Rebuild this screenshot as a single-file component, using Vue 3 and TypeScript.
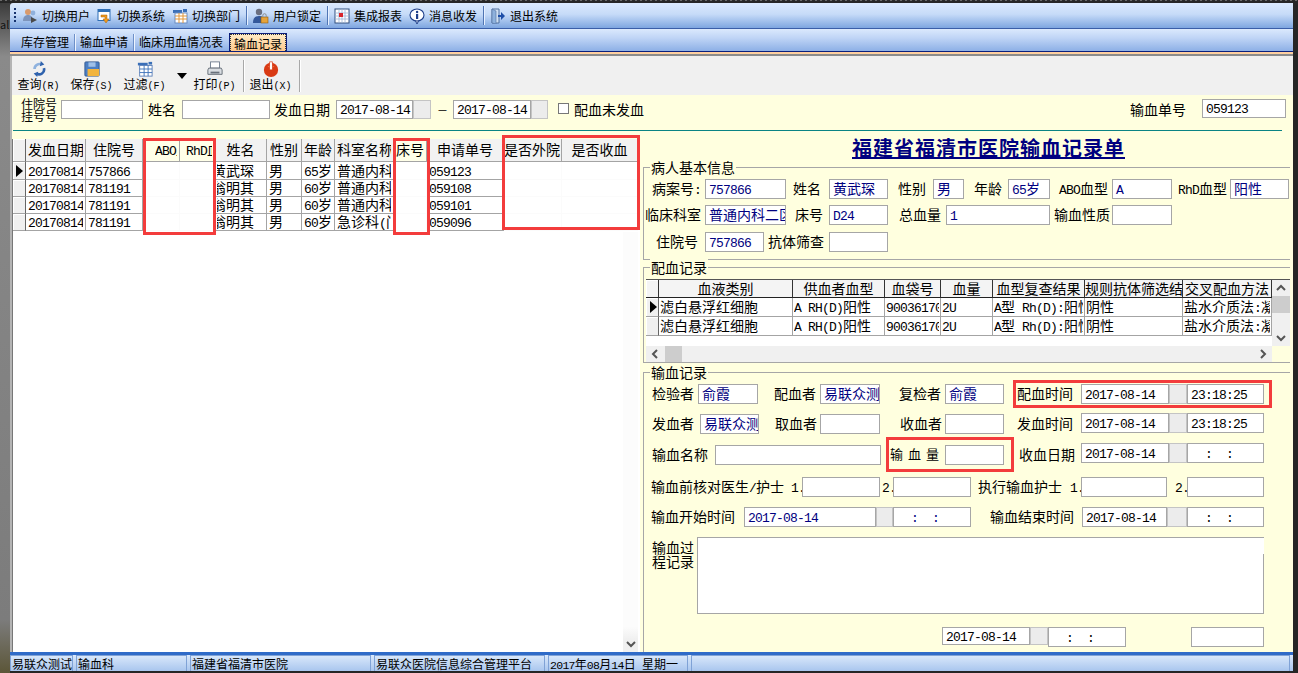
<script setup lang="ts">
interface Cell { k: string; a: number; b: number; t?: string; cls?: string; dy?: number }
interface Placed { cls: string[]; style: Record<string, string>; runs: { t: string; n: boolean }[] }

const runs = (s: string) => (s.match(/[\x20-\x7e]+|[^\x20-\x7e]+/g) || []).map(t => ({ t, n: /^[\x20-\x7e]/.test(t) }))
const l = (t: string, a: number, b: number, cls = '', dy = 0): Cell => ({ k: 'lab', t, a, b, cls, dy })
const f = (t: string, a: number, b: number, cls = '', dy = 0): Cell => ({ k: 'fld', t, a, b, cls, dy })
const v = (t: string, a: number, b: number) => f(t, a, b, 'blue')
const g = (a: number, b: number, cls = '', dy = 0): Cell => ({ k: 'btn', t: '', a, b, cls, dy })

function place(base: number, mt: number, cells: Cell[]) {
  let x = base
  const out: Placed[] = cells.map(c => {
    const st: Record<string, string> = { marginLeft: c.a - x + 'px', width: c.b - c.a + 'px' }
    if (c.dy) st.marginTop = c.dy + 'px'
    x = c.b
    return { cls: [c.k, c.cls || ''], style: st, runs: runs(c.t || '') }
  })
  return { mt: mt + 'px', cells: out }
}

const filterRows = [place(12, 5, [
  l('住院号\n挂号号', 21, 56, 'stack', -2), f('', 61, 143, 'h19'), l('姓名', 148, 177, 'big'), f('', 182, 270, 'h19'),
  l('发血日期', 274, 332), f('2017-08-14', 336, 413, 'h19'), g(413, 431, 'h19'), l('—', 438, 447, 'dash'),
  f('2017-08-14', 453, 531, 'h19'), g(531, 548, 'h19'), { k: 'chk', a: 558, b: 569, dy: 3 }, l('配血未发血', 574, 645),
  l('输血单号', 1130, 1186), f('059123', 1202, 1286, 'h19', -1)
])]

const patientRows = [
  place(644, 11, [l('病案号:', 652, 701), v('757866', 705, 786), l('姓名', 793, 821), v('黄武琛', 829, 888), l('性别', 898, 926), v('男', 933, 964), l('年龄', 974, 1002), v('65岁', 1008, 1050), l('ABO血型', 1059, 1108), v('A', 1112, 1172), l('RhD血型', 1178, 1227), v('阳性', 1230, 1289)]),
  place(644, 6, [l('临床科室', 645, 699), v('普通内科二区', 705, 786), l('床号', 795, 823), v('D24', 829, 888), l('总血量', 899, 942), v('1', 946, 1050), l('输血性质', 1054, 1110), f('', 1112, 1172)]),
  place(644, 7, [l('住院号', 656, 698), v('757866', 705, 764), l('抗体筛查', 768, 824), f('', 829, 888)])
]

const dateTime = (d: string, t: string, dy = 0) => [f(d, 1081, 1169, '', dy), g(1169, 1187, '', dy), f(t, 1187, 1264, '', dy)]
const transRows = [
  place(644, 11, [l('检验者', 652, 694), v('俞霞', 698, 758), l('配血者', 774, 816), v('易联众测试', 820, 880), l('复检者', 899, 941), v('俞霞', 945, 1004), l('配血时间', 1017, 1073), ...dateTime('2017-08-14', '23:18:25')]),
  place(644, 10, [l('发血者', 652, 694), v('易联众测试', 700, 759), l('取血者', 775, 817), f('', 820, 880), l('收血者', 900, 942), f('', 945, 1004), l('发血时间', 1017, 1073), ...dateTime('2017-08-14', '23:18:25', -1)]),
  place(644, 11, [l('输血名称', 652, 708), f('', 715, 881), l('输血量', 890, 940, 'spaced'), f('', 945, 1004), l('收血日期', 1019, 1075), ...dateTime('2017-08-14', '  :  :', -2)]),
  place(644, 12, [l('输血前核对医生/护士', 651, 787), l('1.', 791, 802), f('', 802, 880), l('2.', 882, 893), f('', 893, 971), l('执行输血护士', 978, 1062), l('1.', 1070, 1081), f('', 1081, 1167), l('2.', 1175, 1186), f('', 1187, 1264)]),
  place(644, 10, [l('输血开始时间', 651, 736), f('2017-08-14', 744, 876, 'blue'), g(876, 893), f('  :  :', 893, 971, 'blue'), l('输血结束时间', 990, 1074), f('2017-08-14', 1082, 1167), g(1167, 1187), f('  :  :', 1187, 1264)])
]
const endRows = [place(644, 13, [f('2017-08-14', 942, 1030, 'h18'), g(1030, 1048, 'h18'), f('  :  :', 1048, 1126), f('', 1191, 1264)])]

const leftCols = [13, 60, 57, 37, 35, 52, 35, 33, 59, 33, 77, 58, 76]
const leftHead = [
  { t: '', c: 'ind' }, { t: '发血日期', c: '' }, { t: '住院号', c: '' }, { t: 'ABO血型', c: 'pale abo' }, { t: 'RhD血型', c: 'pale rhd' },
  { t: '姓名', c: '' }, { t: '性别', c: '' }, { t: '年龄', c: '' }, { t: '科室名称', c: '' }, { t: '床号', c: 'pale' },
  { t: '申请单号', c: '' }, { t: '是否外院', c: 'flush' }, { t: '是否收血', c: '' }
].map(h => ({ ...h, runs: runs(h.t) }))
const leftRows = [
  ['20170814', '757866', '', '', '黄武琛', '男', '65岁', '普通内科二区', '', '059123', '', ''],
  ['20170814', '781191', '', '', '翁明其', '男', '60岁', '普通内科二区', '', '059108', '', ''],
  ['20170814', '781191', '', '', '翁明其', '男', '60岁', '普通内科二区', '', '059101', '', ''],
  ['20170814', '781191', '', '', '翁明其', '男', '60岁', '急诊科(门诊)', '', '059096', '', '']
].map(r => r.map(runs))
const leftCellClass = (i: number) => ({ mask: [2, 3, 8, 10, 11].includes(i), clip: i === 4 })

const matchCols = [13, 134, 92, 56, 52, 92, 98, 89]
const matchHead = ['', '血液类别', '供血者血型', '血袋号', '血量', '血型复查结果', '规则抗体筛选结果', '交叉配血方法'].map(runs)
const matchRow = ['滤白悬浮红细胞', 'A RH(D)阳性', '90036170', '2U', 'A型 Rh(D):阳性', '阴性', '盐水介质法:凝集'].map(runs)
const matchRows = [matchRow, matchRow]

const statusCells = [
  { t: '易联众测试员', w: 63 }, { t: '输血科', w: 111 }, { t: '福建省福清市医院', w: 181 },
  { t: '易联众医院信息综合管理平台', w: 171 }, { t: '2017年08月14日 星期一', w: 140 }, { t: '', w: 599 }
].map(s => ({ runs: runs(s.t), style: { width: s.w + 'px' } }))

const marks = [
  [143, 138, 73, 97], [393, 138, 37, 97], [502, 135, 138, 95], [1013, 380, 259, 28], [886, 437, 128, 35]
].map(([x, y, w, h]) => ({ left: x + 'px', top: y + 'px', width: w + 'px', height: h + 'px' }))
</script>

<template>
  <div class="app">
    <div class="dots"></div>
    <div class="shell">
      <div class="strip"><span class="behind">al</span></div>
      <div class="main">
        <div class="bar1">
          <i class="grip"></i>
          <div class="tool">
            <svg viewBox="0 0 16 16"><circle cx="6" cy="4" r="3" fill="#d99a6c"/><circle cx="11" cy="5" r="2.4" fill="#8fb0dc"/><path d="M1 13c0-4 2-6 5-6s5 2 5 6z" fill="#7d94bb"/><path d="M9 9l6 3-6 3z" fill="#4a4a4a"/></svg>
            <span>切换用户</span>
          </div>
          <div class="tool">
            <svg viewBox="0 0 16 16"><rect x="1" y="1.5" width="12" height="11" fill="#fff" stroke="#2f6fb5"/><rect x="1" y="1.5" width="12" height="2.5" fill="#2f6fb5"/><path d="M4 7h6v4h2l-3 4-3-4h2V9H4z" fill="#f09a1c" stroke="#a8620a" stroke-width=".5"/></svg>
            <span>切换系统</span>
          </div>
          <div class="tool">
            <svg viewBox="0 0 16 16"><rect x="1" y="2" width="9" height="3" fill="#3a6fb8"/><rect x="3" y="5" width="12" height="10" fill="#fff" stroke="#6a8cc0"/><path d="M3 8h12M3 11h12M7 5v10M11 5v10" stroke="#e2973a"/><path d="M11 1h4v3h-4z" fill="#3a6fb8"/></svg>
            <span>切换部门</span>
          </div>
          <i class="sep"></i>
          <div class="tool">
            <svg viewBox="0 0 16 16"><circle cx="6" cy="4" r="3.2" fill="#6a6f80"/><path d="M0 15c0-5 2-7 6-7s6 2 6 7z" fill="#34589a"/><rect x="8" y="9" width="7" height="6" fill="#e6a33a" stroke="#8d5c10" stroke-width=".6"/><path d="M9.8 9V7.400a1.700 1.700 0 0 1 3.400 0V9" fill="none" stroke="#8d8d8d"/></svg>
            <span>用户锁定</span>
          </div>
          <i class="sep"></i>
          <div class="tool">
            <svg viewBox="0 0 16 16"><rect x="1" y="1" width="14" height="14" fill="#fff" stroke="#33507f"/><path d="M1 5h14M1 8h14M1 11h14M5 1v14M8 1v14M11 1v14" stroke="#9db4d6" stroke-width=".8"/><rect x="5" y="5" width="4" height="4" fill="#d8262c"/></svg>
            <span>集成报表</span>
          </div>
          <div class="tool">
            <svg viewBox="0 0 16 16"><path d="M6 12l2 4 2-4z" fill="#fff" stroke="#1f3f8a"/><ellipse cx="8" cy="7" rx="7" ry="6" fill="#fff" stroke="#1f3f8a" stroke-width="1.100"/><rect x="7" y="6" width="2.200" height="5" fill="#1f3f8a"/><circle cx="8.100" cy="4" r="1.200" fill="#1f3f8a"/></svg>
            <span>消息收发</span>
          </div>
          <i class="sep"></i>
          <div class="tool">
            <svg viewBox="0 0 16 16"><path d="M2 1h7v14H2z" fill="#cfe0f4" stroke="#50719f"/><path d="M2 1l4 2v13l-4-1z" fill="#8eb1dc" stroke="#50719f" stroke-width=".6"/><path d="M8 7h3V4l4 4-4 4V9H8z" fill="#1d4ea8"/></svg>
            <span>退出系统</span>
          </div>
        </div>

        <div class="tabs">
          <span class="tab">库存管理</span><i class="tabsep"></i>
          <span class="tab">输血申请</span><i class="tabsep"></i>
          <span class="tab">临床用血情况表</span>
          <span class="tab active"><b>输血记录</b></span>
        </div>
        <div class="tabline"></div>

        <div class="page">
          <div class="bar2">
            <div class="big-tool">
              <svg viewBox="0 0 18 18"><path d="M4 9a5.500 5.500 0 0 1 8-5" fill="none" stroke="#8fb2de" stroke-width="3"/><path d="M14.500 8a5.500 5.500 0 0 1-8.500 6" fill="none" stroke="#2f62ad" stroke-width="3"/><path d="M11 0l4 4-5 2zM7 18l-4-4 5-2z" fill="#2f62ad"/></svg>
              <span>查询<span class="num">(R)</span></span>
            </div>
            <div class="big-tool">
              <svg viewBox="0 0 18 18"><rect x="1" y="1" width="16" height="16" rx="1" fill="#4c7fc4" stroke="#2d568f"/><rect x="4" y="9" width="13" height="8" fill="#f2b43d"/><rect x="5" y="1.500" width="8" height="5" fill="#9fc0e8"/></svg>
              <span>保存<span class="num">(S)</span></span>
            </div>
            <div class="big-tool">
              <svg viewBox="0 0 18 18"><rect x="1" y="2" width="11" height="3" fill="#3a6fb8"/><rect x="3" y="5" width="14" height="12" fill="#fff" stroke="#5a7fb8"/><path d="M3 9h14M3 13h14M8 5v12M12.500 5v12" stroke="#3a6fb8"/><rect x="13" y="1" width="4" height="3" fill="#3a6fb8"/></svg>
              <span>过滤<span class="num">(F)</span></span>
            </div>
            <i class="drop"></i>
            <div class="big-tool">
              <svg viewBox="0 0 18 18"><rect x="4" y="1" width="10" height="7" fill="#fff" stroke="#6d7a8c"/><path d="M2 8h14l1 2v5H1v-5z" fill="#d9dde2" stroke="#5d6570"/><rect x="4" y="12" width="10" height="2" fill="#68707b"/></svg>
              <span>打印<span class="num">(P)</span></span>
            </div>
            <i class="sep2 a"></i>
            <div class="big-tool">
              <svg viewBox="0 0 18 18"><circle cx="9" cy="10" r="8" fill="#d93a14"/><path d="M5 6a6 6 0 0 0 8 0" fill="#f17a4e"/><rect x="7.500" y="1" width="3" height="9" fill="#fff" stroke="#d93a14" stroke-width=".8"/></svg>
              <span>退出<span class="num">(X)</span></span>
            </div>
            <i class="sep2 b"></i>
          </div>

          <div class="filter">
            <div v-for="(r, i) in filterRows" :key="i" class="row" :style="{ marginTop: r.mt }">
              <div v-for="(c, j) in r.cells" :key="j" :class="c.cls" :style="c.style"><span v-for="(x, k) in c.runs" :key="k" :class="{ num: x.n }">{{ x.t }}</span></div>
            </div>
          </div>
          <div class="teal"></div>

          <div class="content">
            <div class="left">
              <div class="lgrid">
                <table class="ltable">
                  <colgroup><col v-for="(w, i) in leftCols" :key="i" :style="{ width: w + 'px' }" /></colgroup>
                  <thead>
                    <tr>
                      <th v-for="(h, i) in leftHead" :key="i" :class="h.c"><div class="ct"><span v-for="(x, k) in h.runs" :key="k" :class="{ num: x.n }">{{ x.t }}</span></div></th>
                    </tr>
                  </thead>
                  <tbody>
                    <tr v-for="(r, ri) in leftRows" :key="ri">
                      <td class="ind"><i v-if="ri === 0" class="arrow"></i></td>
                      <td v-for="(c, i) in r" :key="i" :class="leftCellClass(i)"><div class="ct"><span v-for="(x, k) in c" :key="k" :class="{ num: x.n }">{{ x.t }}</span></div></td>
                    </tr>
                  </tbody>
                </table>
                <div class="lscroll">
                  <svg class="chev" viewBox="0 0 10 10"><path d="M1 3l4 4 4-4" fill="none" stroke="#555" stroke-width="2"/></svg>
                </div>
              </div>
            </div>

            <div class="right">
              <h1 class="title">福建省福清市医院输血记录单</h1>

              <div class="group g1">
                <span class="legend">病人基本信息</span>
                <div v-for="(r, i) in patientRows" :key="i" class="row" :style="{ marginTop: r.mt }">
                  <div v-for="(c, j) in r.cells" :key="j" :class="c.cls" :style="c.style"><span v-for="(x, k) in c.runs" :key="k" :class="{ num: x.n }">{{ x.t }}</span></div>
                </div>
              </div>

              <div class="group g2">
                <span class="legend">配血记录</span>
                <div class="mgrid">
                  <div class="mtop">
                    <table class="mtable">
                      <colgroup><col v-for="(w, i) in matchCols" :key="i" :style="{ width: w + 'px' }" /></colgroup>
                      <thead>
                        <tr>
                          <th v-for="(h, i) in matchHead" :key="i" :class="{ ind: i === 0 }"><div class="ct"><span v-for="(x, k) in h" :key="k" :class="{ num: x.n }">{{ x.t }}</span></div></th>
                        </tr>
                      </thead>
                      <tbody>
                        <tr v-for="(r, ri) in matchRows" :key="ri">
                          <td class="ind"><i v-if="ri === 0" class="arrow"></i></td>
                          <td v-for="(c, i) in r" :key="i"><div class="ct"><span v-for="(x, k) in c" :key="k" :class="{ num: x.n }">{{ x.t }}</span></div></td>
                        </tr>
                      </tbody>
                    </table>
                    <div class="vscroll">
                      <svg class="chev" viewBox="0 0 10 10"><path d="M1 7l4-4 4 4" fill="none" stroke="#555" stroke-width="2"/></svg>
                      <i class="vthumb"></i>
                      <svg class="chev" viewBox="0 0 10 10"><path d="M1 3l4 4 4-4" fill="none" stroke="#555" stroke-width="2"/></svg>
                    </div>
                  </div>
                  <div class="hscroll">
                    <svg class="chev" viewBox="0 0 10 10"><path d="M7 1L3 5l4 4" fill="none" stroke="#555" stroke-width="2"/></svg>
                    <i class="hthumb"></i>
                    <svg class="chev end" viewBox="0 0 10 10"><path d="M3 1l4 4-4 4" fill="none" stroke="#555" stroke-width="2"/></svg>
                  </div>
                </div>
              </div>

              <div class="group g3">
                <span class="legend">输血记录</span>
                <div v-for="(r, i) in transRows" :key="i" class="row" :style="{ marginTop: r.mt }">
                  <div v-for="(c, j) in r.cells" :key="j" :class="c.cls" :style="c.style"><span v-for="(x, k) in c.runs" :key="k" :class="{ num: x.n }">{{ x.t }}</span></div>
                </div>
                <div class="notes">
                  <span class="notes-label">输血过<br />程记录</span>
                  <div class="notes-box"></div>
                </div>
                <div v-for="(r, i) in endRows" :key="'e' + i" class="row" :style="{ marginTop: r.mt }">
                  <div v-for="(c, j) in r.cells" :key="j" :class="c.cls" :style="c.style"><span v-for="(x, k) in c.runs" :key="k" :class="{ num: x.n }">{{ x.t }}</span></div>
                </div>
              </div>
            </div>
          </div>
        </div>

        <div class="status">
          <div v-for="(s, i) in statusCells" :key="i" class="panel" :style="s.style"><span v-for="(x, k) in s.runs" :key="k" :class="{ num: x.n }">{{ x.t }}</span></div>
        </div>
      </div>
    </div>
    <div v-for="(m, i) in marks" :key="i" class="mark" :style="m"></div>
  </div>
</template>

<style scoped>
.app {
  position: relative;
  width: 1298px;
  height: 673px;
  overflow: hidden;
  background: #262626;
  font-family: "Noto Sans CJK SC", "Liberation Sans", sans-serif;
  font-size: 14px;
  color: #000;
}
.dots {
  height: 3px;
  background: repeating-linear-gradient(90deg, #6a6a6a 0 2px, #2a2a2a 2px 5px);
  background-size: auto 1px;
  background-repeat: repeat-x;
}
.shell { display: flex; height: 670px; }
.strip {
  width: 10px;
  background: linear-gradient(180deg, #3c3c3c 0, #8a8a8a 8%, #7c7c7c 92%, #5c5638 100%);
  overflow: hidden;
}
.behind { display: block; margin-top: 15px; font-size: 11px; line-height: 12px; color: #111; }
.main { width: 1283px; display: flex; flex-direction: column; }
.num { font-family: "Liberation Mono", monospace; font-size: 13px; letter-spacing: -0.8px; }

.bar1 {
  box-sizing: border-box;
  height: 26px;
  display: flex;
  align-items: center;
  gap: 7px;
  background: linear-gradient(180deg, #dbe9fd 0, #c6dbf8 45%, #7ea6e0 100%);
  border-bottom: 1px solid #3a5ea8;
  border-radius: 3px 0 0 0;
  font-size: 12px;
}
.grip {
  width: 2px;
  height: 15px;
  margin: 0 -1px 0 4px;
  background: repeating-linear-gradient(180deg, #16336e 0 2px, transparent 2px 4px);
}
.tool { display: flex; align-items: center; width: 68px; }
.tool svg { width: 16px; height: 16px; flex: none; margin-right: 4px; }
.sep { width: 1px; height: 19px; margin: 0 -1px; background: #4f75b4; box-shadow: 1px 0 0 #e6f0ff; }

.tabs {
  height: 23px;
  display: flex;
  align-items: flex-end;
  padding-left: 6px;
  box-sizing: border-box;
  font-size: 12px;
  background: linear-gradient(180deg, #dbe9fd 0, #c0d5f6 40%, #8db0e6 100%);
  border-bottom: 1px solid #0b1f7c;
}
.tab { padding: 0 5px; height: 18px; line-height: 18px; }
.tabsep { width: 1px; height: 17px; background: #6e90c8; box-shadow: 1px 0 0 #edf4ff; }
.tab.active {
  box-sizing: border-box;
  width: 58px;
  margin-left: 1px;
  padding: 0;
  border: 1px solid #0b1f7c;
  border-bottom: 0;
  background: linear-gradient(180deg, #ffecc8, #ffc98a);
}
.active b {
  display: block;
  font-weight: 400;
  height: 17px;
  line-height: 17px;
  text-align: center;
  border: 1px dotted #333;
  border-bottom: 0;
  box-sizing: border-box;
}
.tabline { height: 4px; background: linear-gradient(180deg, #ffd0a0 0 2px, #8c8c8c 2px 4px); }

.page { flex: 1; display: flex; flex-direction: column; border-left: 2px solid #b4b4b4; min-height: 0; }
.bar2 { height: 39px; flex: none; display: flex; align-items: flex-start; gap: 12px; padding-left: 6px; background: #f0f0f0; font-size: 12px; }
.big-tool { width: 41px; display: flex; flex-direction: column; align-items: center; padding-top: 5px; }
.big-tool svg { width: 16px; height: 16px; }
.big-tool > span { line-height: 14px; white-space: nowrap; }
.bar2 .num { font-size: 10px; letter-spacing: 0; }
.drop {
  width: 0;
  height: 0;
  margin: 17px -5px 0 0;
  border: 5px solid transparent;
  border-top: 6px solid #000;
  border-bottom: 0;
}
.sep2 { width: 1px; height: 32px; margin-top: 4px; background: #a8a8a8; box-shadow: 1px 0 0 #fff; }
.sep2.a { margin-left: -4px; margin-right: -6px; }
.sep2.b { margin-left: -4px; }

.filter { height: 35px; flex: none; background: #ffffdf; overflow: hidden; }
.teal { height: 1px; flex: none; background: linear-gradient(90deg, #ffffdf 0 1px, #0a8484 1px 1270px, #ffffdf 1270px); }

.row { display: flex; align-items: flex-start; height: 20px; }
.lab, .fld { flex: none; white-space: pre; box-sizing: border-box; }
.lab { line-height: 18px; overflow: visible; }
.fld {
  height: 20px;
  line-height: 16px;
  padding-left: 3px;
  background: #fff;
  border: 1px solid #a6a6a6;
  overflow: hidden;
}
.fld.h19 { height: 19px; line-height: 15px; }
.fld.h18 { height: 18px; line-height: 15px; }
.fld.blue { color: #000080; }
.btn { flex: none; box-sizing: border-box; height: 20px; background: #ececec; border: 1px solid #c4c4c4; }
.btn.h19 { height: 19px; }
.btn.h18 { height: 18px; }
.chk { flex: none; box-sizing: border-box; height: 11px; background: #fff; border: 1px solid #777; }
.stack { font-size: 12px; line-height: 12px; }
.big { font-size: 14px; }
.dash { font-size: 10px; }
.spaced { font-size: 13px; letter-spacing: 5px; }

.content { flex: 1; display: flex; min-height: 0; background: #ffffdf; }
.left { width: 628px; flex: none; box-sizing: border-box; padding: 8px 0 0 1px; }
.lgrid { position: relative; height: 513px; background: #fff; border-left: 1px solid #777; margin-left: -1px; overflow: hidden; }
table { border-collapse: separate; border-spacing: 0; table-layout: fixed; }
.ltable { width: 625px; }
th, td {
  box-sizing: border-box;
  padding: 0 2px;
  overflow: hidden;
  white-space: pre;
  font-weight: 400;
  border-right: 1px solid #a4a4a4;
  border-bottom: 1px solid #a4a4a4;
}
.ct { height: 16px; line-height: 15px; overflow: hidden; }
.ltable th { height: 23px; background: #f2f2f2; text-align: center; }
.ltable th.pale { background: #ffffe8; }
.ltable th.abo { text-align: left; padding-left: 12px; }
.ltable th.rhd { text-align: left; padding-left: 6px; }
.ltable th.flush { padding: 0; text-align: left; }
.ltable td { height: 17px; }
.ltable tbody tr:first-child td { height: 18px; }
td.mask { border-color: #fbfbfb; }
td.clip { text-indent: -5px; }
th.ind, td.ind { background: #f0f0f0; padding: 0; border-right-color: #666; box-shadow: inset 1px 1px 0 #fff; }
.arrow {
  display: block;
  width: 0;
  height: 0;
  margin-left: 3px;
  border-left: 7px solid #000;
  border-top: 6px solid transparent;
  border-bottom: 6px solid transparent;
}
.lscroll {
  position: absolute;
  right: 2px;
  top: 93px;
  bottom: 0;
  width: 15px;
  background: linear-gradient(180deg, #fcfcfc 0 94%, #f0f0f0 97%);
  display: flex;
  align-items: flex-end;
  justify-content: center;
}
.chev { width: 10px; height: 10px; flex: none; margin: 3px 4px; }
.lscroll .chev { margin: 0 0 3px; }

.right { width: 653px; flex: none; overflow: hidden; }
.title {
  margin: 0;
  height: 36px;
  box-sizing: border-box;
  padding: 3px 0 0 44px;
  text-align: center;
  font-size: 20px;
  line-height: 28px;
  letter-spacing: 1px;
  font-weight: 700;
  color: #000080;
  text-decoration: underline;
}
.group {
  position: relative;
  box-sizing: border-box;
  width: 647px;
  margin-left: 3px;
  border: 1px solid #a6a6a6;
  border-right: 0;
}
.legend {
  position: absolute;
  left: 6px;
  top: -9px;
  padding: 0 1px;
  line-height: 17px;
  background: #ffffdf;
}
.g1 { height: 93px; }
.g2 { height: 96px; margin-top: 7px; }
.g3 { height: 280px; margin-top: 9px; border-bottom: 0; }

.mgrid { width: 644px; height: 83px; margin: 11px 0 0 2px; display: flex; flex-direction: column; border-top: 1px solid #555; box-sizing: border-box; }
.mtop { display: flex; height: 66px; background: #fff; }
.mtable { width: 626px; align-self: flex-start; }
.mtable th { height: 18px; background: #f4f4f4; text-align: center; padding: 0; border-right-color: #333; border-bottom-color: #222; }
.mtable td { height: 19px; padding: 0 1px; }
.vscroll { width: 18px; background: #f0f0f0; display: flex; flex-direction: column; align-items: center; }
.vthumb { width: 18px; height: 17px; margin: 0 0 auto; background: #cdcdcd; }
.hscroll { height: 16px; background: #f0f0f0; display: flex; align-items: center; margin-right: 18px; }
.hthumb { width: 17px; height: 16px; background: #cdcdcd; margin-left: 1px; }
.chev.end { margin-left: auto; }

.notes { display: flex; margin-top: 10px; height: 77px; }
.notes-label { width: 45px; margin-left: 8px; box-sizing: border-box; line-height: 14px; padding-top: 3px; flex: none; }
.notes-box { position: relative; width: 567px; box-sizing: border-box; background: #fff; border: 1px solid #a6a6a6; }
.notes-box::after { content: ""; position: absolute; right: -1px; top: 0; width: 1px; height: 16px; background: #fff; }

.status {
  height: 19px;
  flex: none;
  margin-bottom: 2px;
  display: flex;
  gap: 3px;
  box-sizing: border-box;
  border-top: 3px solid #2f6bc8;
  background: linear-gradient(180deg, #dbe9fb, #a9c6ee);
  font-size: 12px;
}
.panel {
  flex: none;
  box-sizing: border-box;
  height: 16px;
  line-height: 15px;
  padding-left: 1px;
  border: 1px solid #7fa2d6;
  border-bottom: 0;
  overflow: hidden;
  white-space: pre;
}
.status .num { font-size: 11.5px; letter-spacing: -0.7px; }
.mark { position: absolute; box-sizing: border-box; border: 3px solid #f33c3c; pointer-events: none; }
</style>

<style>
html, body { margin: 0; overflow: hidden; }
</style>
